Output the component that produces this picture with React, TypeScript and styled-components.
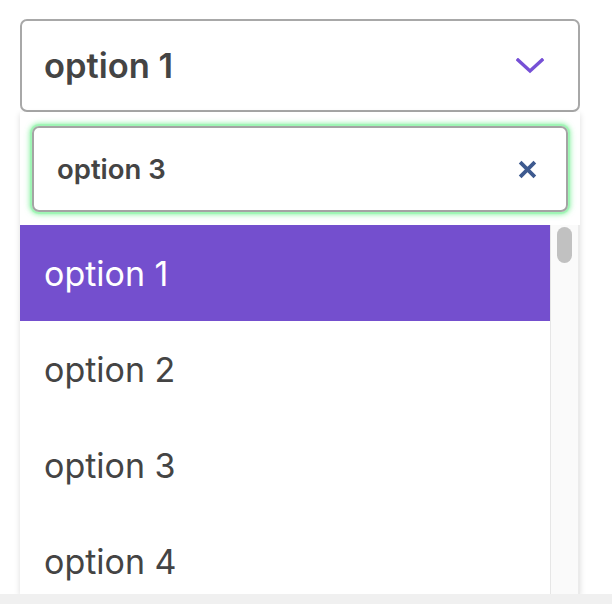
import React from 'react'
import styled, { createGlobalStyle } from 'styled-components'

const GlobalStyle = createGlobalStyle`
  html, body {
    margin: 0;
    padding: 0;
    background: #fff;
  }
  body {
    font-family: Inter, "Noto Sans", sans-serif;
    color: #444;
    overflow: hidden;
  }
`

const Page = styled.div`
  width: 612px;
  height: 604px;
  display: flex;
  flex-direction: column;
  overflow: hidden;
`

const Stage = styled.div`
  flex: 1;
  min-height: 0;
  padding: 19px 32px 0 20px;
  display: flex;
  flex-direction: column;
  overflow: hidden;
`

const Trigger = styled.div`
  height: 93px;
  box-sizing: border-box;
  border: 2px solid #a8a8a8;
  border-radius: 7px;
  display: flex;
  align-items: center;
  justify-content: space-between;
  padding: 0 34px 0 22px;
  font-size: 34.5px;
  font-weight: 600;
  color: #444;
  flex-shrink: 0;
`

const Panel = styled.div`
  flex: 1;
  min-height: 0;
  background: #fff;
  box-shadow: 0 2px 6px rgba(0, 0, 0, 0.14);
  display: flex;
  flex-direction: column;
  overflow: hidden;
`

const SearchWrap = styled.div`
  padding: 14px 12px 13px;
  flex-shrink: 0;
`

const Search = styled.div`
  height: 86px;
  box-sizing: border-box;
  border: 2px solid #a4a4a4;
  border-radius: 7px;
  box-shadow: 0 0 1px 2px #9ef5b4, 0 0 5px 3px rgba(120, 240, 150, 0.7);
  display: flex;
  align-items: center;
  justify-content: space-between;
  padding: 0 28px 0 23px;
  font-size: 27.5px;
  font-weight: 600;
  color: #444;
`

const ListArea = styled.div`
  flex: 1;
  min-height: 0;
  display: flex;
`

const List = styled.div`
  flex: 1;
  display: flex;
  flex-direction: column;
`

const Option = styled.div<{ $active?: boolean }>`
  height: 96px;
  flex-shrink: 0;
  display: flex;
  align-items: center;
  padding-left: 24px;
  font-size: 34px;
  font-weight: 400;
  color: ${p => (p.$active ? '#fff' : '#444')};
  background: ${p => (p.$active ? '#744fce' : '#fff')};
`

const Track = styled.div`
  width: 27px;
  border-left: 1px solid #e6e6e6;
  border-right: 2px solid #ebebeb;
  background: #fafafa;
  display: flex;
  justify-content: center;
  padding-top: 2px;
`

const Thumb = styled.div`
  width: 15px;
  height: 36px;
  border-radius: 8px;
  background: #c1c1c1;
`

const BottomBar = styled.div`
  height: 10px;
  background: #f0f0f0;
  flex-shrink: 0;
`

const Chevron = () => (
  <svg width="28" height="16" viewBox="0 0 28 16" fill="none">
    <path d="M2 2 L14 13 L26 2" stroke="#7650d6" strokeWidth="3.4" strokeLinecap="square" />
  </svg>
)

const Cross = () => (
  <svg width="21" height="21" viewBox="0 0 20 20" fill="none">
    <path d="M3 3 L17 17 M17 3 L3 17" stroke="#3e5a8f" strokeWidth="3.6" />
  </svg>
)

const options = ['option 1', 'option 2', 'option 3', 'option 4']

export default function App() {
  return (
    <Page>
      <GlobalStyle />
      <Stage>
        <Trigger>
          <span>option 1</span>
          <Chevron />
        </Trigger>
        <Panel>
          <SearchWrap>
            <Search>
              <span>option 3</span>
              <Cross />
            </Search>
          </SearchWrap>
          <ListArea>
            <List>
              {options.map((o, i) => (
                <Option key={o} $active={i === 0}>
                  {o}
                </Option>
              ))}
            </List>
            <Track>
              <Thumb />
            </Track>
          </ListArea>
        </Panel>
      </Stage>
      <BottomBar />
    </Page>
  )
}
